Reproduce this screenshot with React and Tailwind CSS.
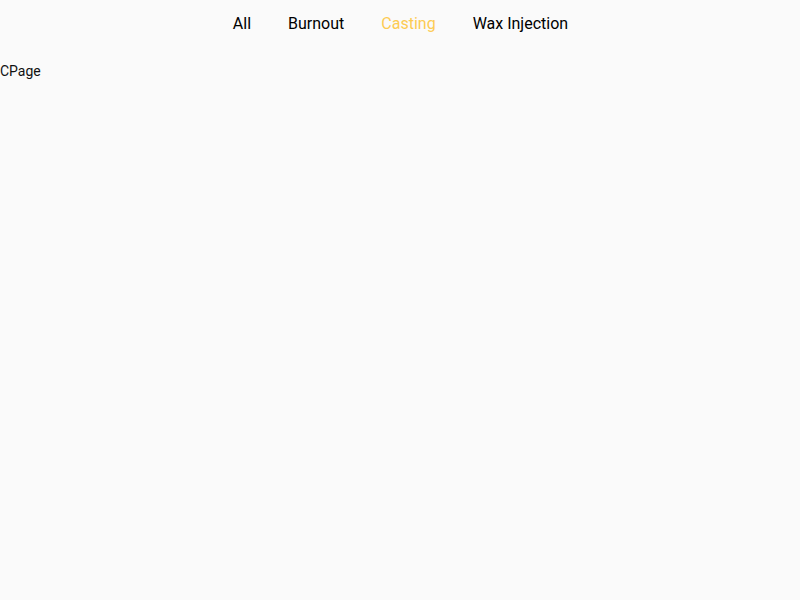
import { useState } from "react"

const tabs = ["All", "Burnout", "Casting", "Wax Injection"]

function App() {
  const [active, setActive] = useState("Casting")

  return (
    <div
      className="min-h-screen bg-[#fafafa] text-black"
      style={{ fontFamily: "Roboto, 'Liberation Sans', sans-serif" }}
    >
      <nav className="flex justify-center gap-[37px] pt-[12px] pl-[1px] h-[61px]">
        {tabs.map((tab) => (
          <button
            key={tab}
            onClick={() => setActive(tab)}
            className={
              tab === active
                ? "text-base leading-6 h-6 text-[#fdcb52]"
                : "text-base leading-6 h-6 text-black"
            }
          >
            {tab}
          </button>
        ))}
      </nav>

      <p className="text-sm leading-5 text-[#111]">CPage</p>
    </div>
  )
}

export default App
